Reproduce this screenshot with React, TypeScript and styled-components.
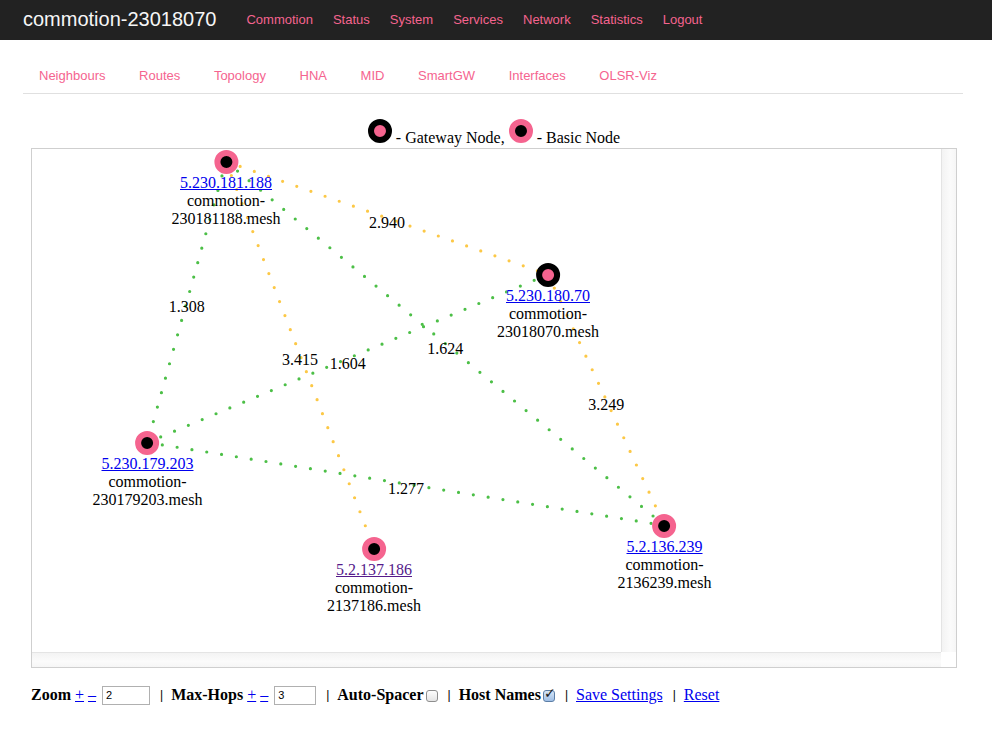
import * as React from 'react';
import styled, { createGlobalStyle } from 'styled-components';

const GlobalStyle = createGlobalStyle`
  body {
    margin: 0;
    background: #fff;
    font-family: "Liberation Serif", "Times New Roman", serif;
    font-size: 16px;
    color: #000;
  }
`

const PINK = '#f5648f';
const GREEN = '#4cbf47';
const YELLOW = '#fcc846';

const Navbar = styled.div`
  height: 40px;
  box-sizing: border-box;
  padding: 0 0 2px 23px;
  background: #222;
  display: flex;
  align-items: center;
  font-family: "Liberation Sans", Arial, sans-serif;
`

const Brand = styled.a`
  color: #f6f6f6;
  font-size: 20px;
  padding-right: 20px;
  text-decoration: none;
`

const TopLink = styled.a`
  color: ${PINK};
  font-size: 13px;
  padding: 0 10px;
  text-decoration: none;
`

const SubNav = styled.div`
  margin: 0 29px 0 23px;
  padding: 27px 0 8px 16px;
  border-bottom: 1px solid #e0e0e0;
  display: flex;
  font-family: "Liberation Sans", Arial, sans-serif;
`

const SubLink = styled.a`
  color: ${PINK};
  font-size: 13px;
  line-height: 18px;
  margin-right: 33.6px;
  text-decoration: none;
`

const Legend = styled.div`
  margin: 25px 35px 0 31px;
  height: 29px;
  text-align: center;
  line-height: 26px;
`

const Dot = styled.span<{ $gw?: boolean }>`
  display: inline-block;
  box-sizing: border-box;
  width: 24px;
  height: 24px;
  border-radius: 50%;
  background: ${p => (p.$gw ? PINK : '#000')};
  border: 6px solid ${p => (p.$gw ? '#000' : PINK)};
  vertical-align: baseline;
`

const Frame = styled.div`
  margin: 0 35px 0 31px;
  width: 924px;
  border: 1px solid #cfcfcf;
  display: grid;
  grid-template-columns: 909px 15px;
  grid-template-rows: 503px 15px;
`

const Canvas = styled.div`
  position: relative;
  overflow: hidden;
  background: #fff;
`

const VTrack = styled.div`
  border-left: 1px solid #e4e4e4;
  background: linear-gradient(to right, #f3f3f3, #fbfbfb 60%, #f6f6f6);
`

const HTrack = styled.div`
  border-top: 1px solid #e4e4e4;
  background: linear-gradient(to bottom, #f3f3f3, #fbfbfb 60%, #f6f6f6);
`

const Corner = styled.div`
  background: #fff;
`

const Lines = styled.svg`
  position: absolute;
  left: 0;
  top: 0;
`

const NodeBox = styled.div`
  position: absolute;
  transform: translateX(-50%);
  display: flex;
  flex-direction: column;
  align-items: center;
  white-space: nowrap;
  line-height: 18px;
`

const NodeLink = styled.a<{ $visited?: boolean }>`
  color: ${p => (p.$visited ? '#551a8b' : '#0000ee')};
  text-decoration: underline;
`

const EdgeLabel = styled.div`
  position: absolute;
  transform: translate(-50%, -50%);
  line-height: 18px;
  white-space: nowrap;
`

const Controls = styled.div`
  margin: 17px 0 0 31px;
  display: flex;
  align-items: center;
  line-height: 20px;
  white-space: nowrap;
`

const Label = styled.b`
  font-weight: bold;
`

const Step = styled.a`
  color: #0000ee;
  text-decoration: underline;
  margin-left: 4px;
`

const NumInput = styled.input<{ $w: number }>`
  box-sizing: border-box;
  width: ${p => p.$w}px;
  height: 19px;
  margin: 0 0 0 6px;
  padding: 0 3px;
  border: 1px solid #b0b0b0;
  font-family: "Liberation Sans", Arial, sans-serif;
  font-size: 11px;
`

const Sep = styled.span`
  font-family: "Liberation Sans", Arial, sans-serif;
  font-size: 12px;
  margin: 0 8px 0 10px;
`

const Check = styled.input`
  appearance: none;
  box-sizing: border-box;
  width: 12px;
  height: 12px;
  margin: 2px 0 0 2px;
  border: 1px solid #8e8e8e;
  border-radius: 3px;
  background: linear-gradient(#fdfdfd, #e4e4e4);
  position: relative;
  &:checked {
    background: linear-gradient(#d8e6f6, #9fbfe6);
    border-color: #5c7ea6;
  }
  &:checked::after {
    content: '✓';
    position: absolute;
    left: 0px;
    top: -6px;
    font-family: "DejaVu Sans", sans-serif;
    font-size: 14px;
    font-weight: bold;
    color: #1c1c1c;
  }
`

const TextLink = styled.a`
  color: #0000ee;
  text-decoration: underline;
`

const nodes = [
  { id: 'A', ip: '5.230.181.188', host: '230181188.mesh', x: 194, y: 12.5 },
  { id: 'B', ip: '5.230.180.70', host: '23018070.mesh', x: 516, y: 125.5, gw: true },
  { id: 'C', ip: '5.230.179.203', host: '230179203.mesh', x: 115.5, y: 293.5 },
  { id: 'D', ip: '5.2.137.186', host: '2137186.mesh', x: 342, y: 399.5, visited: true },
  { id: 'E', ip: '5.2.136.239', host: '2136239.mesh', x: 632.5, y: 376.5 },
]

const edges = [
  { a: 'A', b: 'B', etx: '2.940', good: false },
  { a: 'A', b: 'C', etx: '1.308', good: true },
  { a: 'A', b: 'D', etx: '3.415', good: false },
  { a: 'A', b: 'E', etx: '1.624', good: true },
  { a: 'B', b: 'C', etx: '1.604', good: true },
  { a: 'B', b: 'E', etx: '3.249', good: false },
  { a: 'C', b: 'E', etx: '1.277', good: true },
]

const byId = (id: string) => nodes.find(n => n.id === id)!;

const topNav = ['Commotion', 'Status', 'System', 'Services', 'Network', 'Statistics', 'Logout'];
const subNav = ['Neighbours', 'Routes', 'Topology', 'HNA', 'MID', 'SmartGW', 'Interfaces', 'OLSR-Viz'];

export default function App() {
  return (
    <>
      <GlobalStyle />
      <Navbar>
        <Brand href="#">commotion-23018070</Brand>
        {topNav.map(t => <TopLink key={t} href="#">{t}</TopLink>)}
      </Navbar>
      <SubNav>
        {subNav.map(t => <SubLink key={t} href="#">{t}</SubLink>)}
      </SubNav>

      <Legend>
        <Dot $gw /> - Gateway Node, <Dot /> - Basic Node
      </Legend>

      <Frame>
        <Canvas>
          <Lines width="909" height="503">
            {edges.map(e => {
              const a = byId(e.a);
              const b = byId(e.b);
              return (
                <line
                  key={e.a + e.b}
                  x1={a.x} y1={a.y} x2={b.x} y2={b.y}
                  stroke={e.good ? GREEN : YELLOW}
                  strokeWidth="3.2"
                  strokeLinecap="round"
                  strokeDasharray="0 15"
                />
              );
            })}
          </Lines>
          {edges.map(e => {
            const a = byId(e.a);
            const b = byId(e.b);
            return (
              <EdgeLabel key={'l' + e.a + e.b} style={{ left: (a.x + b.x) / 2, top: (a.y + b.y) / 2 + 5 }}>
                {e.etx}
              </EdgeLabel>
            );
          })}
          {nodes.map(n => (
            <NodeBox key={n.id} style={{ left: n.x, top: n.y - 12 }}>
              <Dot $gw={n.gw} />
              <NodeLink href="#" $visited={n.visited}>{n.ip}</NodeLink>
              <span>commotion-</span>
              <span>{n.host}</span>
            </NodeBox>
          ))}
        </Canvas>
        <VTrack />
        <HTrack />
        <Corner />
      </Frame>

      <Controls>
        <Label>Zoom</Label>
        <Step href="#">+</Step>
        <Step href="#">–</Step>
        <NumInput $w={48} defaultValue="2" />
        <Sep>|</Sep>
        <Label>Max-Hops</Label>
        <Step href="#">+</Step>
        <Step href="#">–</Step>
        <NumInput $w={42} defaultValue="3" />
        <Sep>|</Sep>
        <Label>Auto-Spacer</Label>
        <Check type="checkbox" />
        <Sep>|</Sep>
        <Label>Host Names</Label>
        <Check type="checkbox" defaultChecked />
        <Sep>|</Sep>
        <TextLink href="#">Save Settings</TextLink>
        <Sep>|</Sep>
        <TextLink href="#">Reset</TextLink>
      </Controls>
    </>
  )
}
